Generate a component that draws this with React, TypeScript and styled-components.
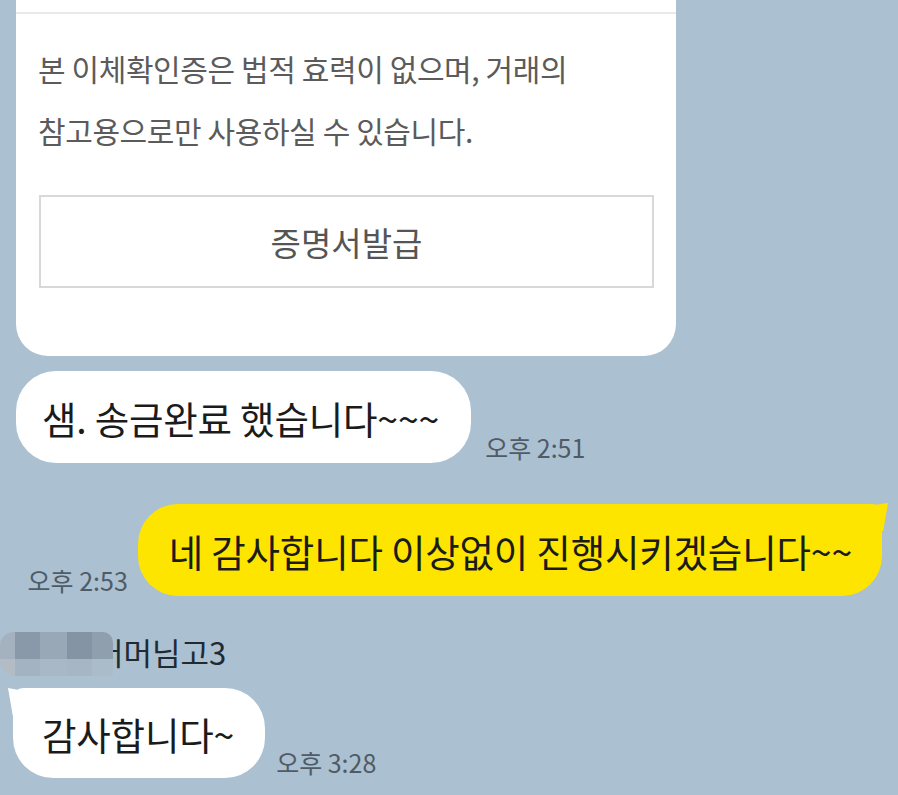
import React from "react";
import styled, { createGlobalStyle } from "styled-components";

const Global = createGlobalStyle`
  html, body {
    margin: 0;
    padding: 0;
    background: #abc0d1;
  }
  body {
    font-family: "Noto Sans CJK KR", "Noto Sans", sans-serif;
  }
`;

const Screen = styled.div`
  width: 898px;
  height: 795px;
  overflow: hidden;
  background: #abc0d1;
  display: flex;
  flex-direction: column;
`;

const Card = styled.div`
  margin-left: 16px;
  width: 660px;
  background: #ffffff;
  border-radius: 0 0 32px 32px;
  display: flex;
  flex-direction: column;
`;

const CardHeader = styled.div`
  height: 12px;
  border-bottom: 2px solid #e9e9e9;
`;

const CardBody = styled.div`
  padding: 23px 22px 68px 22px;
  display: flex;
  flex-direction: column;
`;

const Notice = styled.p`
  margin: 0;
  font-size: 30px;
  line-height: 62px;
  color: #5b5b5b;
  letter-spacing: -0.4px;
`;

const IssueButton = styled.div`
  margin-top: 34px;
  margin-left: 1px;
  width: 615px;
  height: 93px;
  box-sizing: border-box;
  border: 2px solid #d8d8d8;
  display: flex;
  align-items: center;
  justify-content: center;
  font-size: 33px;
  color: #555555;
`;

const Row = styled.div<{ $mine?: boolean; $top: number; $side: number; $gap: number }>`
  display: flex;
  align-items: flex-end;
  justify-content: ${(p) => (p.$mine ? "flex-end" : "flex-start")};
  margin-top: ${(p) => p.$top}px;
  ${(p) => (p.$mine ? `padding-right: ${p.$side}px;` : `padding-left: ${p.$side}px;`)}
  gap: ${(p) => p.$gap}px;
`;

const Bubble = styled.div<{
  $mine?: boolean;
  $tail?: boolean;
  $h: number;
  $pl: number;
  $pr: number;
}>`
  position: relative;
  height: ${(p) => p.$h}px;
  box-sizing: border-box;
  padding: 0 ${(p) => p.$pr}px 0 ${(p) => p.$pl}px;
  display: flex;
  align-items: center;
  background: ${(p) => (p.$mine ? "#fee500" : "#ffffff")};
  border-radius: 40px;
  font-size: 37.5px;
  color: #1b1b1b;
  white-space: nowrap;
  letter-spacing: -0.2px;

  ${(p) =>
    p.$tail && p.$mine
      ? `
    border-top-right-radius: 10px;
    &::after {
      content: "";
      position: absolute;
      top: -1px;
      right: -6px;
      width: 30px;
      height: 28px;
      background: #fee500;
      clip-path: polygon(0 4%, 60% 6%, 100% 0, 84% 100%, 0 100%);
    }
  `
      : ""}
  ${(p) =>
    p.$tail && !p.$mine
      ? `
    border-top-left-radius: 10px;
    &::after {
      content: "";
      position: absolute;
      top: 0px;
      left: -5px;
      width: 30px;
      height: 28px;
      background: #ffffff;
      clip-path: polygon(0 0, 40% 8%, 100% 4%, 100% 100%, 16% 100%);
    }
  `
      : ""}
`;

const Time = styled.span`
  font-size: 25px;
  line-height: 28px;
  color: #4f5b66;
  margin-bottom: 2px;
  white-space: nowrap;
`;

const NameRow = styled.div`
  position: relative;
  margin-top: 38px;
  height: 36px;
  padding-left: 95px;
  font-size: 31px;
  line-height: 36px;
  color: #222a31;
`;

const Mosaic = styled.div`
  position: absolute;
  left: 0;
  top: -2px;
  width: 113px;
  height: 44px;
  display: grid;
  grid-template-columns: 15px 25px 27px 25px 21px;
  grid-template-rows: 27px 17px;
  border-radius: 14px 10px 4px 16px;
  overflow: hidden;
  filter: blur(0.6px);
`;

const Cell = styled.div<{ $c: string }>`
  background: ${(p) => p.$c};
`;

const mosaicColors = [
  "#a4b2bf",
  "#8999a9",
  "#98a8b7",
  "#8494a4",
  "#909fae",
  "#b3bcc4",
  "#a3b3c2",
  "#a8b8c7",
  "#a6b6c5",
  "#aabbca",
];

export default function App() {
  return (
    <Screen>
      <Global />
      <Card>
        <CardHeader />
        <CardBody>
          <Notice>
            본 이체확인증은 법적 효력이 없으며, 거래의
            <br />
            참고용으로만 사용하실 수 있습니다.
          </Notice>
          <IssueButton>증명서발급</IssueButton>
        </CardBody>
      </Card>

      <Row $top={15} $side={16} $gap={14}>
        <Bubble $h={92} $pl={26} $pr={32}>
          샘. 송금완료 했습니다~~~
        </Bubble>
        <Time>오후 2:51</Time>
      </Row>

      <Row $mine $top={41} $side={16} $gap={10}>
        <Time>오후 2:53</Time>
        <Bubble $mine $tail $h={92} $pl={31} $pr={30}>
          네 감사합니다 이상없이 진행시키겠습니다~~
        </Bubble>
      </Row>

      <NameRow>
        어머님고3
        <Mosaic>
          {mosaicColors.map((c, i) => (
            <Cell key={i} $c={c} />
          ))}
        </Mosaic>
      </NameRow>

      <Row $top={18} $side={13} $gap={11}>
        <Bubble $tail $h={90} $pl={29} $pr={31}>
          감사합니다~
        </Bubble>
        <Time>오후 3:28</Time>
      </Row>
    </Screen>
  );
}
